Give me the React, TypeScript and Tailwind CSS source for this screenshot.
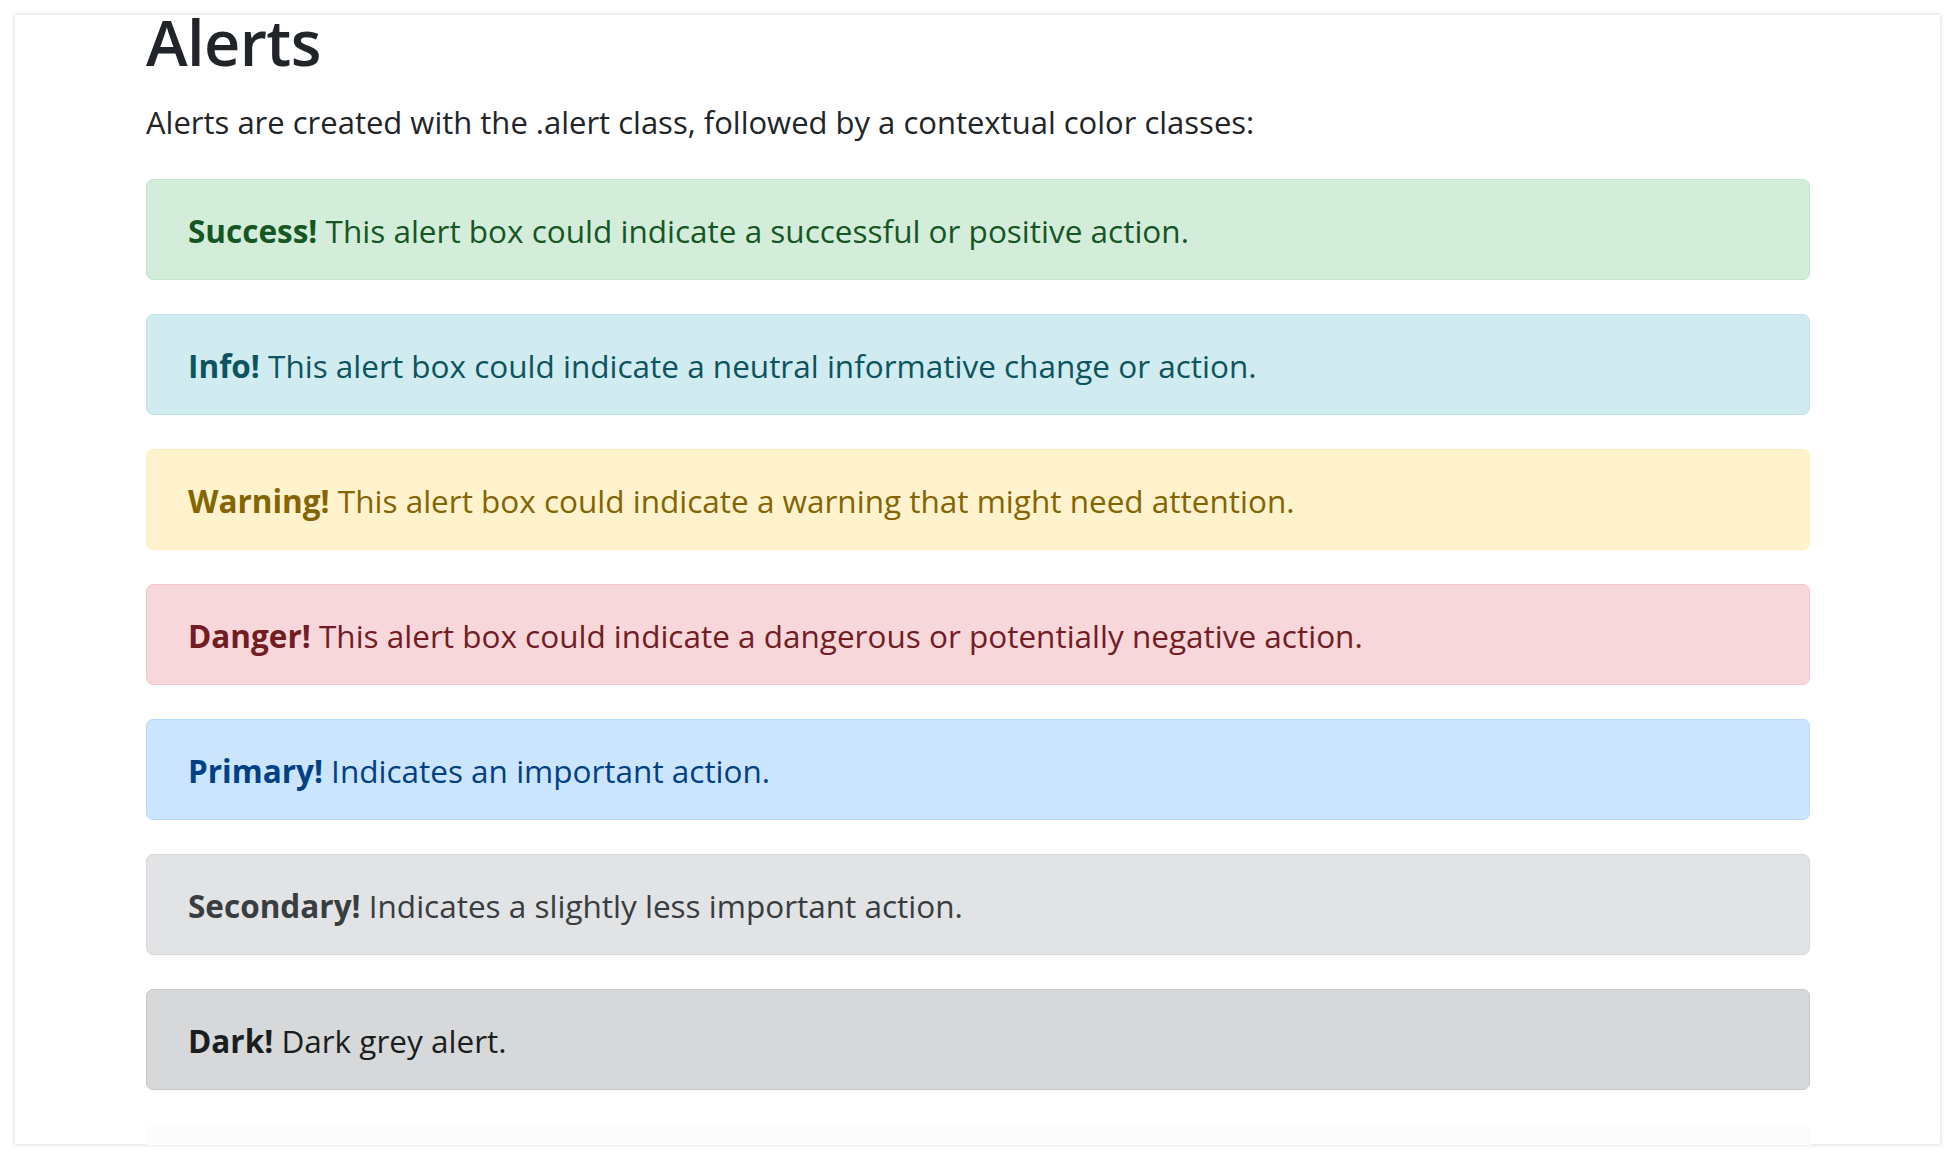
import React from "react";

type Alert = { cls: string; strong: string; text: string };

const alerts: Alert[] = [
  { cls: "bg-[#d4edda] border-[#c3e6cb] text-[#155724]", strong: "Success!", text: "This alert box could indicate a successful or positive action." },
  { cls: "bg-[#d1ecf1] border-[#bee5eb] text-[#0c5460]", strong: "Info!", text: "This alert box could indicate a neutral informative change or action." },
  { cls: "bg-[#fff3cd] border-[#ffeeba] text-[#856404]", strong: "Warning!", text: "This alert box could indicate a warning that might need attention." },
  { cls: "bg-[#f8d7da] border-[#f5c6cb] text-[#721c24]", strong: "Danger!", text: "This alert box could indicate a dangerous or potentially negative action." },
  { cls: "bg-[#cce5ff] border-[#b8daff] text-[#004085]", strong: "Primary!", text: "Indicates an important action." },
  { cls: "bg-[#e2e3e5] border-[#d6d8db] text-[#383d41]", strong: "Secondary!", text: "Indicates a slightly less important action." },
  { cls: "bg-[#d6d8d9] border-[#c6c8ca] text-[#1b1e21]", strong: "Dark!", text: "Dark grey alert." },
];

export default function App() {
  return (
    <div className="min-h-[1159px] bg-white pt-[15px] pl-[15px]" style={{ fontFamily: '"Open Sans", "Noto Sans", sans-serif' }}>
      <div className="w-[1925px] h-[1129px] bg-white shadow-[0_0_4px_1px_rgba(0,0,0,0.13)] pt-[3px] pl-[131px] pr-[130px]">
        <h1 className="text-[63px] leading-[48px] font-semibold text-[#212529] tracking-[-0.6px]">Alerts</h1>
        <p className="mt-[33px] text-[31px] leading-[46.5px] text-[#212529]">
          Alerts are created with the .alert class, followed by a contextual color classes:
        </p>
        <div className="mt-[33px] flex flex-col gap-[34px]">
          {alerts.map((a) => (
            <div
              key={a.strong}
              className={`border rounded-[7px] pl-[41px] pr-[40px] pt-[27px] pb-[25px] text-[31.5px] leading-[47px] ${a.cls}`}
            >
              <strong className="font-bold">{a.strong}</strong> {a.text}
            </div>
          ))}
          <div className="h-[21px] border border-b-0 border-[#fdfdfe] bg-[#fcfcfc] rounded-t-[7px]" />
        </div>
      </div>
    </div>
  );
}
